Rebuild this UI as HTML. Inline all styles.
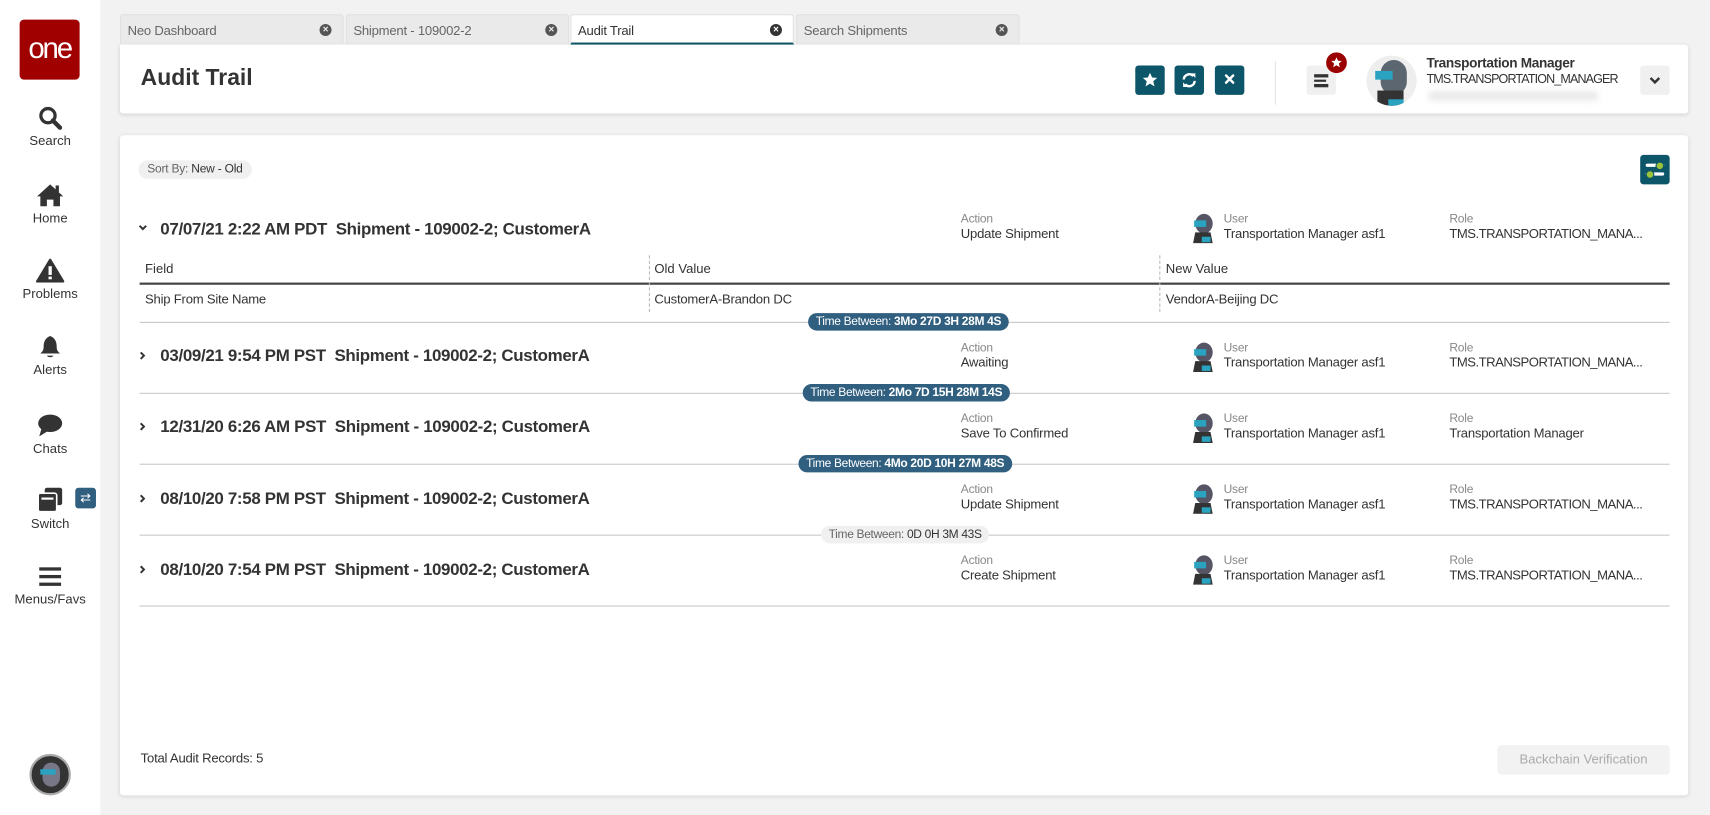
<!DOCTYPE html>
<html><head><meta charset="utf-8">
<style>
*{box-sizing:border-box;margin:0;padding:0}
html,body{width:1710px;height:815px;overflow:hidden;background:#f2f2f2}
#w{position:absolute;left:0;top:0;width:1568px;height:747px;transform:scale(1.09056,1.09103);transform-origin:0 0;font-family:"Liberation Sans",sans-serif;color:#333}
.a{position:absolute}
.side{left:0;top:0;width:92px;height:747px;background:#fff}
.logo{left:18px;top:18px;width:55px;height:55px;background:#a00000;border-radius:4px;color:#fff;font-size:27px;text-align:center;line-height:52px;letter-spacing:-2px}
.nav{left:0;width:92px;text-align:center;font-size:12px;color:#333}
.nav svg{display:block;margin:0 auto 3px}
.tab{top:13px;height:27px;width:205px;background:#eaeaea;border:1px solid #e0e0e0;border-bottom:none;border-radius:3px 3px 0 0;font-size:12px;color:#666;padding:7px 6px;letter-spacing:-.2px}
.tab .x{position:absolute;right:10px;top:8px;width:11px;height:11px;border-radius:50%;background:#555;color:#eee;font-size:9px;line-height:11px;text-align:center;font-weight:bold}
.panel{background:#fff;border-radius:3px;box-shadow:0 1px 4px rgba(0,0,0,.12)}
.tb{width:27px;height:27px;border-radius:3px;background:#0d5568}
.tb svg{display:block;margin:6px auto}
.lbl{font-size:11px;color:#888;letter-spacing:-.2px}
.val{font-size:12px;color:#333;letter-spacing:-.2px}
.role{letter-spacing:-.45px}
.hd{font-size:15.5px;font-weight:bold;color:#333;letter-spacing:-.3px;white-space:pre}
.line{height:1px;background:#c8c8c8;left:128px;width:1403px}
.pill{height:16px;border-radius:8px;background:#305f80;color:#fff;font-size:11px;line-height:16px;padding:0 7px;letter-spacing:-.3px;white-space:nowrap;transform:translateX(-50%)}
.pill b{font-weight:bold}
</style></head><body><div id="w">

<div class="a side"></div>
<div class="a logo">one</div>
<div class="a nav" style="top:97px"><svg width="22" height="22" viewBox="0 0 22 22"><circle cx="9" cy="9" r="6.5" fill="none" stroke="#333" stroke-width="3"/><path d="M13.5 13.5 L20 20" stroke="#333" stroke-width="4" stroke-linecap="round"/></svg>Search</div>
<div class="a nav" style="top:168px"><svg width="26" height="22" viewBox="0 0 26 22"><path d="M13 1 L1 12 L4 12 L4 21 L10 21 L10 15 L16 15 L16 21 L22 21 L22 12 L25 12 Z" fill="#333"/><rect x="18" y="2" width="3" height="6" fill="#333"/></svg>Home</div>
<div class="a nav" style="top:237px"><svg width="26" height="22" viewBox="0 0 26 22"><path d="M13 1 L25 21 L1 21 Z" fill="#333" stroke="#333" stroke-linejoin="round" stroke-width="2"/><rect x="11.5" y="7" width="3" height="8" fill="#fff"/><rect x="11.5" y="16.5" width="3" height="2.5" fill="#fff"/></svg>Problems</div>
<div class="a nav" style="top:307px"><svg width="22" height="22" viewBox="0 0 22 22"><path d="M11 1 C6 3 5 7 5 11 C5 14 4 15 2 17 L20 17 C18 15 17 14 17 11 C17 7 16 3 11 1Z" fill="#333"/><path d="M8 19 L14 19 C13 21 9 21 8 19Z" fill="#333"/></svg>Alerts</div>
<div class="a nav" style="top:379px"><svg width="24" height="22" viewBox="0 0 24 22"><ellipse cx="12" cy="9" rx="11" ry="8" fill="#333"/><path d="M4 14 L2 21 L10 16Z" fill="#333"/></svg>Chats</div>
<div class="a nav" style="top:446px"><svg width="26" height="24" viewBox="0 0 26 24"><rect x="8" y="1" width="16" height="16" rx="2" fill="#333"/><rect x="2" y="6" width="17" height="17" rx="2" fill="#333" stroke="#fff" stroke-width="1.5"/><rect x="5" y="10" width="11" height="2" fill="#fff"/></svg>Switch</div>
<div class="a" style="left:69px;top:447px;width:19px;height:19px;background:#305f80;border-radius:3px;color:#fff;font-size:12px;text-align:center;line-height:19px">⇄</div>
<div class="a nav" style="top:517px"><svg width="24" height="22" viewBox="0 0 24 22"><rect x="2" y="3" width="20" height="3" fill="#333"/><rect x="2" y="10" width="20" height="3" fill="#333"/><rect x="2" y="17" width="20" height="3" fill="#333"/></svg>Menus/Favs</div>
<div class="a" style="left:27px;top:691px;width:38px;height:38px;border-radius:50%;background:#333;border:2px solid #aaa"><div class="a" style="left:10px;top:6px;width:16px;height:22px;border-radius:8px;background:#778"></div><div class="a" style="left:8px;top:12px;width:14px;height:5px;background:#2aa3c0"></div></div>

<div class="a tab" style="left:110px">Neo Dashboard<span class="x">×</span></div>
<div class="a tab" style="left:317px">Shipment - 109002-2<span class="x">×</span></div>
<div class="a tab" style="left:523px;background:#fff;color:#333;border-bottom:2px solid #0d5568;height:28px">Audit Trail<span class="x" style="background:#333;color:#fff">×</span></div>
<div class="a tab" style="left:730px">Search Shipments<span class="x">×</span></div>

<div class="a panel" style="left:110px;top:41px;width:1438px;height:63px;border-radius:0 3px 3px 3px"></div>
<div class="a" style="left:129px;top:60px;font-size:21px;font-weight:bold;color:#333">Audit Trail</div>
<div class="a tb" style="left:1041px;top:60px"><svg width="15" height="15" viewBox="0 0 24 24"><path d="M12 1 L15.1 8 L22.5 8.6 L16.8 13.6 L18.6 21 L12 17 L5.4 21 L7.2 13.6 L1.5 8.6 L8.9 8Z" fill="#fff"/></svg></div>
<div class="a tb" style="left:1077px;top:60px"><svg width="15" height="15" viewBox="0 0 24 24"><path d="M4 11 A8 8 0 0 1 18 6" fill="none" stroke="#fff" stroke-width="3.5"/><path d="M15 2 L21 2 L21 9Z" fill="#fff"/><path d="M20 13 A8 8 0 0 1 6 18" fill="none" stroke="#fff" stroke-width="3.5"/><path d="M9 22 L3 22 L3 15Z" fill="#fff"/></svg></div>
<div class="a tb" style="left:1114px;top:60px"><svg width="13" height="13" viewBox="0 0 20 20"><path d="M5 5 L15 15 M15 5 L5 15" stroke="#fff" stroke-width="3.5" stroke-linecap="round"/></svg></div>
<div class="a" style="left:1169px;top:56px;width:1px;height:40px;background:#e6e6e6"></div>
<div class="a" style="left:1198px;top:60px;width:27px;height:27px;border-radius:3px;background:#f0f0f0"><div class="a" style="left:7px;top:8px;width:13px;height:2.5px;background:#333"></div><div class="a" style="left:7px;top:12.5px;width:11px;height:2.5px;background:#333"></div><div class="a" style="left:7px;top:17px;width:13px;height:2.5px;background:#333"></div></div>
<div class="a" style="left:1216px;top:48px;width:19px;height:19px;border-radius:50%;background:#9b0000"><svg class="a" style="left:4px;top:3.5px" width="11" height="11" viewBox="0 0 24 24"><path d="M12 1 L15.1 8 L22.5 8.6 L16.8 13.6 L18.6 21 L12 17 L5.4 21 L7.2 13.6 L1.5 8.6 L8.9 8Z" fill="#fff"/></svg></div>
<div class="a" style="left:1253px;top:51px;width:46px;height:46px;border-radius:50%;background:#eee;overflow:hidden"><div class="a" style="left:13px;top:4px;width:24px;height:32px;border-radius:12px;background:#5b6670"></div><div class="a" style="left:8px;top:14px;width:16px;height:8px;background:#2aa3c0"></div><div class="a" style="left:10px;top:32px;width:24px;height:14px;background:#333"></div><div class="a" style="left:20px;top:40px;width:14px;height:6px;background:#2aa3c0"></div></div>
<div class="a" style="left:1308px;top:51px;font-size:12.5px;font-weight:bold;color:#333;letter-spacing:-.3px">Transportation Manager</div>
<div class="a" style="left:1308px;top:67px;font-size:11.5px;color:#333;letter-spacing:-.8px">TMS.TRANSPORTATION_MANAGER</div>
<div class="a" style="left:1310px;top:84px;width:155px;height:8px;background:#e8e8e8;filter:blur(3px)"></div>
<div class="a" style="left:1504px;top:60px;width:27px;height:27px;border-radius:3px;background:#f0f0f0"><svg class="a" style="left:8px;top:10px" width="11" height="8" viewBox="0 0 11 8"><path d="M1.5 1.5 L5.5 5.5 L9.5 1.5" fill="none" stroke="#333" stroke-width="2.2"/></svg></div>

<div class="a panel" style="left:110px;top:124px;width:1438px;height:605px"></div>
<div class="a" style="left:127px;top:147px;height:17px;padding:0 8px;border-radius:9px;background:#f0f0f0;font-size:11px;line-height:17px;color:#666;letter-spacing:-.2px">Sort By: <span style="color:#333">New - Old</span></div>
<div class="a" style="left:1504px;top:142px;width:27px;height:27px;border-radius:3px;background:#0d5568"><div class="a" style="left:5px;top:8px;width:17px;height:3px;border-radius:2px;background:#fff"></div><div class="a" style="left:5px;top:16px;width:17px;height:3px;border-radius:2px;background:#fff"></div><div class="a" style="left:14px;top:5.5px;width:8px;height:8px;border-radius:50%;background:#9cc13a;border:1px solid #0d5568"></div><div class="a" style="left:5px;top:13.5px;width:8px;height:8px;border-radius:50%;background:#9cc13a;border:1px solid #0d5568"></div></div>

<!-- row 1 -->
<svg class="a" style="left:127px;top:206px" width="8" height="6" viewBox="0 0 8 6"><path d="M1 1 L4 4 L7 1" fill="none" stroke="#333" stroke-width="1.8"/></svg>
<div class="a hd" style="left:147px;top:202px">07/07/21 2:22 AM PDT  Shipment - 109002-2; CustomerA</div>
<div class="a lbl" style="left:881px;top:195px">Action</div><div class="a val" style="left:881px;top:207px">Update Shipment</div>
<div class="a lbl" style="left:1122px;top:195px">User</div><div class="a val" style="left:1122px;top:207px">Transportation Manager asf1</div>
<div class="a lbl" style="left:1329px;top:195px">Role</div><div class="a val role" style="left:1329px;top:207px">TMS.TRANSPORTATION_MANA...</div>

<div class="a" style="left:133px;top:239px;font-size:12px;color:#333">Field</div>
<div class="a" style="left:600px;top:239px;font-size:12px;color:#333">Old Value</div>
<div class="a" style="left:1069px;top:239px;font-size:12px;color:#333">New Value</div>
<div class="a" style="left:128px;top:259px;width:1403px;height:1.5px;background:#444"></div>
<div class="a" style="left:595px;top:234px;height:52px;border-left:1px dashed #bbb"></div>
<div class="a" style="left:1063px;top:234px;height:52px;border-left:1px dashed #bbb"></div>
<div class="a val" style="left:133px;top:267px">Ship From Site Name</div>
<div class="a val" style="left:600px;top:267px">CustomerA-Brandon DC</div>
<div class="a val" style="left:1069px;top:267px">VendorA-Beijing DC</div>
<div class="a line" style="top:295px"></div>
<div class="a pill" style="left:833px;top:287px">Time Between: <b>3Mo 27D 3H 28M 4S</b></div>

<svg class="a" style="left:128px;top:322px" width="6" height="8" viewBox="0 0 6 8"><path d="M1 1 L4 4 L1 7" fill="none" stroke="#333" stroke-width="1.8"/></svg>
<div class="a hd" style="left:147px;top:318px">03/09/21 9:54 PM PST  Shipment - 109002-2; CustomerA</div>
<div class="a lbl" style="left:881px;top:313px">Action</div><div class="a val" style="left:881px;top:325px">Awaiting</div>
<div class="a lbl" style="left:1122px;top:313px">User</div><div class="a val" style="left:1122px;top:325px">Transportation Manager asf1</div>
<div class="a lbl" style="left:1329px;top:313px">Role</div><div class="a val role" style="left:1329px;top:325px">TMS.TRANSPORTATION_MANA...</div>
<div class="a line" style="top:360px"></div>
<div class="a pill" style="left:831px;top:352px">Time Between: <b>2Mo 7D 15H 28M 14S</b></div>

<svg class="a" style="left:128px;top:387px" width="6" height="8" viewBox="0 0 6 8"><path d="M1 1 L4 4 L1 7" fill="none" stroke="#333" stroke-width="1.8"/></svg>
<div class="a hd" style="left:147px;top:383px">12/31/20 6:26 AM PST  Shipment - 109002-2; CustomerA</div>
<div class="a lbl" style="left:881px;top:378px">Action</div><div class="a val" style="left:881px;top:390px">Save To Confirmed</div>
<div class="a lbl" style="left:1122px;top:378px">User</div><div class="a val" style="left:1122px;top:390px">Transportation Manager asf1</div>
<div class="a lbl" style="left:1329px;top:378px">Role</div><div class="a val" style="left:1329px;top:390px">Transportation Manager</div>
<div class="a line" style="top:425px"></div>
<div class="a pill" style="left:830px;top:417px">Time Between: <b>4Mo 20D 10H 27M 48S</b></div>

<svg class="a" style="left:128px;top:453px" width="6" height="8" viewBox="0 0 6 8"><path d="M1 1 L4 4 L1 7" fill="none" stroke="#333" stroke-width="1.8"/></svg>
<div class="a hd" style="left:147px;top:449px">08/10/20 7:58 PM PST  Shipment - 109002-2; CustomerA</div>
<div class="a lbl" style="left:881px;top:443px">Action</div><div class="a val" style="left:881px;top:455px">Update Shipment</div>
<div class="a lbl" style="left:1122px;top:443px">User</div><div class="a val" style="left:1122px;top:455px">Transportation Manager asf1</div>
<div class="a lbl" style="left:1329px;top:443px">Role</div><div class="a val role" style="left:1329px;top:455px">TMS.TRANSPORTATION_MANA...</div>
<div class="a line" style="top:490px"></div>
<div class="a pill" style="left:830px;top:482px;background:#f0f0f0;color:#666">Time Between: <b style="font-weight:normal;color:#333">0D 0H 3M 43S</b></div>

<svg class="a" style="left:128px;top:518px" width="6" height="8" viewBox="0 0 6 8"><path d="M1 1 L4 4 L1 7" fill="none" stroke="#333" stroke-width="1.8"/></svg>
<div class="a hd" style="left:147px;top:514px">08/10/20 7:54 PM PST  Shipment - 109002-2; CustomerA</div>
<div class="a lbl" style="left:881px;top:508px">Action</div><div class="a val" style="left:881px;top:520px">Create Shipment</div>
<div class="a lbl" style="left:1122px;top:508px">User</div><div class="a val" style="left:1122px;top:520px">Transportation Manager asf1</div>
<div class="a lbl" style="left:1329px;top:508px">Role</div><div class="a val role" style="left:1329px;top:520px">TMS.TRANSPORTATION_MANA...</div>
<div class="a line" style="top:555px"></div>

<svg class="a" style="left:1092px;top:195px" width="22" height="28" viewBox="0 0 22 28"><ellipse cx="12" cy="10" rx="8" ry="9" fill="#556"/><rect x="3" y="7" width="11" height="6" fill="#2aa3c0"/><path d="M4 18 L18 18 L20 28 L2 28Z" fill="#333"/><rect x="10" y="22" width="8" height="5" fill="#2aa3c0"/></svg>
<svg class="a" style="left:1092px;top:313px" width="22" height="28" viewBox="0 0 22 28"><ellipse cx="12" cy="10" rx="8" ry="9" fill="#556"/><rect x="3" y="7" width="11" height="6" fill="#2aa3c0"/><path d="M4 18 L18 18 L20 28 L2 28Z" fill="#333"/><rect x="10" y="22" width="8" height="5" fill="#2aa3c0"/></svg>
<svg class="a" style="left:1092px;top:378px" width="22" height="28" viewBox="0 0 22 28"><ellipse cx="12" cy="10" rx="8" ry="9" fill="#556"/><rect x="3" y="7" width="11" height="6" fill="#2aa3c0"/><path d="M4 18 L18 18 L20 28 L2 28Z" fill="#333"/><rect x="10" y="22" width="8" height="5" fill="#2aa3c0"/></svg>
<svg class="a" style="left:1092px;top:443px" width="22" height="28" viewBox="0 0 22 28"><ellipse cx="12" cy="10" rx="8" ry="9" fill="#556"/><rect x="3" y="7" width="11" height="6" fill="#2aa3c0"/><path d="M4 18 L18 18 L20 28 L2 28Z" fill="#333"/><rect x="10" y="22" width="8" height="5" fill="#2aa3c0"/></svg>
<svg class="a" style="left:1092px;top:508px" width="22" height="28" viewBox="0 0 22 28"><ellipse cx="12" cy="10" rx="8" ry="9" fill="#556"/><rect x="3" y="7" width="11" height="6" fill="#2aa3c0"/><path d="M4 18 L18 18 L20 28 L2 28Z" fill="#333"/><rect x="10" y="22" width="8" height="5" fill="#2aa3c0"/></svg>

<div class="a val" style="left:129px;top:688px">Total Audit Records: 5</div>
<div class="a" style="left:1373px;top:683px;width:158px;height:27px;border-radius:3px;background:#f2f2f2;color:#aaa;font-size:12px;text-align:center;line-height:27px">Backchain Verification</div>

</div></body></html>
